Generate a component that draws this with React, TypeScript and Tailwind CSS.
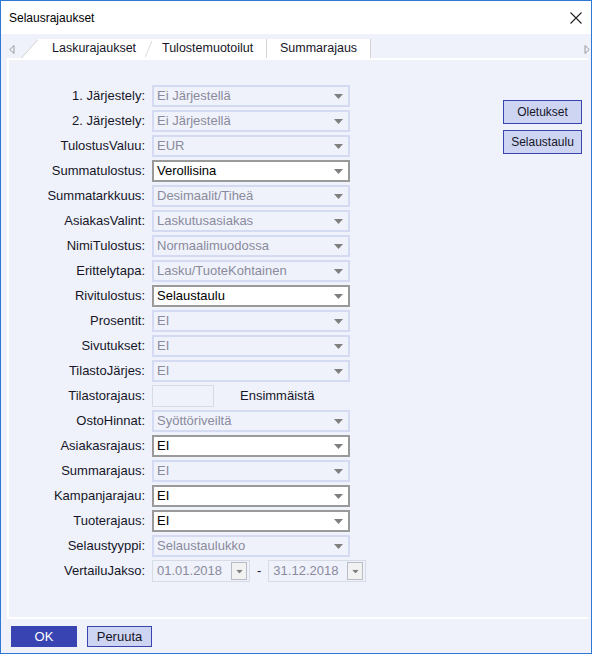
import React from "react";

type Row = { label: string; value: string; enabled?: boolean };

const rowsTop: Row[] = [
  { label: "1. Järjestely:", value: "Ei Järjestellä" },
  { label: "2. Järjestely:", value: "Ei Järjestellä" },
  { label: "TulostusValuu:", value: "EUR" },
  { label: "Summatulostus:", value: "Verollisina", enabled: true },
  { label: "Summatarkkuus:", value: "Desimaalit/Tiheä" },
  { label: "AsiakasValint:", value: "Laskutusasiakas" },
  { label: "NimiTulostus:", value: "Normaalimuodossa" },
  { label: "Erittelytapa:", value: "Lasku/TuoteKohtainen" },
  { label: "Rivitulostus:", value: "Selaustaulu", enabled: true },
  { label: "Prosentit:", value: "EI" },
  { label: "Sivutukset:", value: "EI" },
  { label: "TilastoJärjes:", value: "EI" },
];

const rowsBottom: Row[] = [
  { label: "OstoHinnat:", value: "Syöttöriveiltä" },
  { label: "Asiakasrajaus:", value: "EI", enabled: true },
  { label: "Summarajaus:", value: "EI" },
  { label: "Kampanjarajau:", value: "EI", enabled: true },
  { label: "Tuoterajaus:", value: "EI", enabled: true },
  { label: "Selaustyyppi:", value: "Selaustaulukko" },
];

function Arrow({ className = "" }: { className?: string }) {
  return (
    <svg width="9" height="5" viewBox="0 0 9 5" className={className}>
      <path d="M0 0 H9 L4.5 5 Z" fill="#7f7f7f" />
    </svg>
  );
}

function Label({ children }: { children: React.ReactNode }) {
  return <div className="w-[137px] text-right pr-[1px] text-[#161628] whitespace-nowrap">{children}</div>;
}

function Select({ row }: { row: Row }) {
  return (
    <div className="flex h-[22px] items-center gap-[6px]">
      <Label>{row.label}</Label>
      <div
        className={
          row.enabled
            ? "w-[198px] h-[22px] flex items-center justify-between pl-[3px] pr-[5px] border-2 border-[#9a9a9a] bg-white text-black"
            : "w-[198px] h-[22px] flex items-center justify-between pl-[3px] pr-[5px] border-2 border-[#d4daf2] bg-[#eff2fb] text-[#8a8a9c]"
        }
      >
        <span className="whitespace-nowrap">{row.value}</span>
        <Arrow />
      </div>
    </div>
  );
}

function DateBox({ value }: { value: string }) {
  return (
    <div className="w-[98px] h-[22px] flex items-center justify-between pl-[4px] pr-[2px] border border-[#d6dbe6] bg-[#eff2fb] text-[#8a8a9c]">
      <span>{value}</span>
      <div className="w-[16px] h-[18px] flex items-center justify-center border border-[#b9bcc4] bg-[#f2f2f2]">
        <Arrow className="scale-75" />
      </div>
    </div>
  );
}

export default function App() {
  return (
    <div
      className="w-[592px] h-[654px] border border-[#2d79d3] bg-[#eff2fb] flex flex-col text-[13px] overflow-hidden"
      style={{ fontFamily: '"Liberation Sans", Arial, sans-serif' }}
    >
      {/* title bar */}
      <div className="h-[33px] bg-white flex items-center justify-between pl-[8px] pr-[9px] shrink-0">
        <span className="text-[12px] text-black">Selausrajaukset</span>
        <svg width="12" height="12" viewBox="0 0 12 12">
          <path d="M0.5 0.5 L11.5 11.5 M11.5 0.5 L0.5 11.5" stroke="#222" strokeWidth="1.1" />
        </svg>
      </div>

      {/* tabs */}
      <div className="h-[24px] shrink-0 flex items-end relative text-[12.5px] text-[#161628]">
        <svg width="6" height="9" viewBox="0 0 6 9" className="absolute left-[8px] top-[11px]">
          <path d="M5 0.5 L0.8 4.5 L5 8.5 Z" fill="none" stroke="#9a9a9a" />
        </svg>
        <div className="ml-[20px] flex items-end h-[19px]">
          <svg width="17" height="19" viewBox="0 0 17 19" className="block">
            <path d="M0 19 L17 0 L17 19 Z" fill="#ffffff" />
            <path d="M0.5 19 L17 0.5" stroke="#d0d0d0" />
          </svg>
          <div className="h-[19px] w-[107px] bg-white flex items-center pl-[14px]">Laskurajaukset</div>
          <svg width="8" height="19" viewBox="0 0 8 19" className="block">
            <rect width="8" height="19" fill="#ffffff" />
            <path d="M0 18.5 L7 2" stroke="#dadada" />
          </svg>
          <div className="h-[19px] w-[113px] bg-white flex items-center pl-[9px]">Tulostemuotoilut</div>
          <div className="h-[19px] w-[105px] bg-white border-l border-r border-[#d4d4d4] flex items-center pl-[13px]">
            Summarajaus
          </div>
        </div>
        <svg width="6" height="9" viewBox="0 0 6 9" className="absolute right-[1px] top-[11px]">
          <path d="M1 0.5 L5.2 4.5 L1 8.5 Z" fill="none" stroke="#9a9a9a" />
        </svg>
      </div>

      {/* panel */}
      <div className="h-[561px] shrink-0 ml-[6px] mr-[3px] border-2 border-r-0 border-white flex">
        <div className="pt-[25px] flex flex-col gap-[3px]">
          {rowsTop.map((r) => (
            <Select key={r.label} row={r} />
          ))}
          <div className="flex h-[22px] items-center gap-[6px]">
            <Label>Tilastorajaus:</Label>
            <div className="w-[62px] h-[22px] border border-[#d6dbe6] bg-[#eff2fb]" />
            <span className="ml-[20px] text-[#161628]">Ensimmäistä</span>
          </div>
          {rowsBottom.map((r) => (
            <Select key={r.label} row={r} />
          ))}
          <div className="flex h-[22px] items-center gap-[6px]">
            <Label>VertailuJakso:</Label>
            <DateBox value="01.01.2018" />
            <span className="px-[1px] text-[#161628]">-</span>
            <DateBox value="31.12.2018" />
          </div>
        </div>
        <div className="ml-auto mr-[6px] mt-[40px] flex flex-col gap-[6px] text-[12px] text-[#161628]">
          <button className="w-[79px] h-[24px] bg-[#cdd5f3] border border-[#3a44b0]">Oletukset</button>
          <button className="w-[79px] h-[24px] bg-[#cdd5f3] border border-[#3a44b0]">Selaustaulu</button>
        </div>
      </div>

      {/* footer */}
      <div className="flex-1 flex items-start pt-[7px] pl-[10px] gap-[10px] text-[13px]">
        <button className="w-[66px] h-[21px] bg-[#3944b3] text-white">OK</button>
        <button className="w-[65px] h-[21px] bg-[#cdd5f3] border border-[#3a44b0] text-[#161628]">Peruuta</button>
      </div>
    </div>
  );
}
